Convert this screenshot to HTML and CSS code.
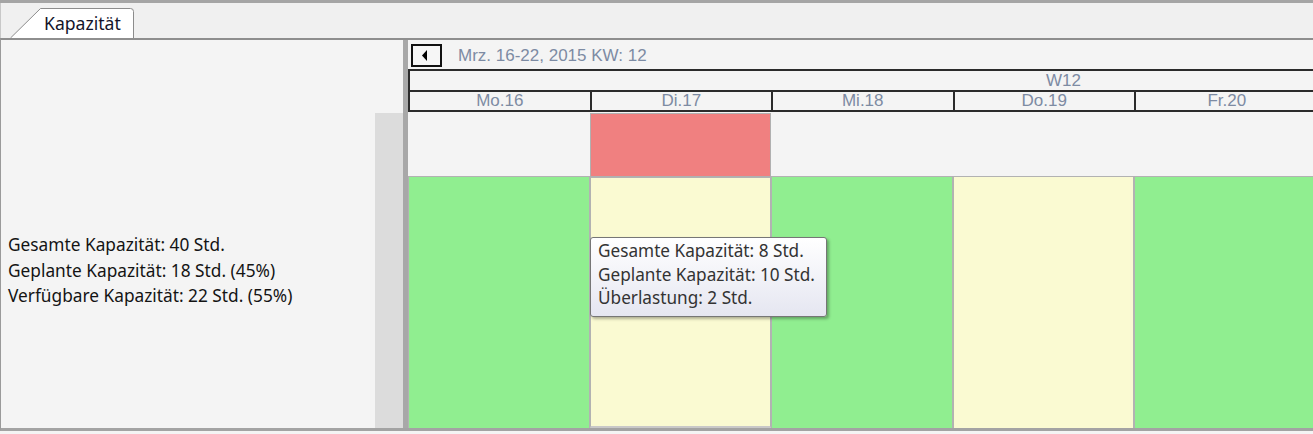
FILE: index.html
```html
<!DOCTYPE html>
<html>
<head>
<meta charset="utf-8">
<link rel="stylesheet" href="styles.css">
</head>
<body>
<div class="frame">
  <div class="tabstrip">
    <div class="tab">
      <svg class="tab-shape" width="126" height="32" viewBox="0 0 126 32">
        <path d="M0.5 31 L30.5 1.5 L120.5 1.5 Q123.5 1.5 123.5 4.5 L123.5 31" fill="#ffffff" stroke="#8c8c8c" stroke-width="1"/>
      </svg>
      <span class="tab-label">Kapazität</span>
    </div>
  </div>
  <div class="content">
    <div class="left">
      <div class="summary">
        <div>Gesamte Kapazität: 40 Std.</div>
        <div>Geplante Kapazität: 18 Std. (45%)</div>
        <div>Verfügbare Kapazität: 22 Std. (55%)</div>
      </div>
      <div class="gutter"></div>
    </div>
    <div class="divider"></div>
    <div class="right">
      <div class="toolbar">
        <div class="navbtn"><svg width="8" height="11" viewBox="0 0 8 11"><path d="M6 0 L6 11 L1 5.5 Z" fill="#000"/></svg></div>
        <span class="range">Mrz. 16-22, 2015 KW: 12</span>
      </div>
      <div class="header">
        <div class="week"><span class="week-label">W12</span></div>
        <div class="days">
          <div class="day">Mo.16</div>
          <div class="day">Di.17</div>
          <div class="day">Mi.18</div>
          <div class="day">Do.19</div>
          <div class="day last">Fr.20</div>
        </div>
      </div>
      <div class="grid">
        <div class="col"><div class="top"></div><div class="bar green"></div></div>
        <div class="col"><div class="top red"></div><div class="bar yellow"></div></div>
        <div class="col"><div class="top"></div><div class="bar green"></div></div>
        <div class="col"><div class="top"></div><div class="bar yellow full"></div></div>
        <div class="col last"><div class="top"></div><div class="bar green open"></div></div>
      </div>
      <div class="tooltip">
        <div>Gesamte Kapazität: 8 Std.</div>
        <div>Geplante Kapazität: 10 Std.</div>
        <div>Überlastung: 2 Std.</div>
      </div>
    </div>
  </div>
</div>
</body>
</html>
```
FILE: styles.css
```css
* { box-sizing: border-box; }
html, body {
  margin: 0;
  padding: 0;
  overflow: hidden;
}
body {
  width: 1313px;
  height: 434px;
  background: #f4f4f4;
  font-family: "Liberation Sans", Arial, sans-serif;
}
.frame {
  border-top: 3px solid #a5a5a5;
  height: 434px;
  display: flex;
  flex-direction: column;
}
.tabstrip {
  height: 35px;
  background: #f0f0f0;
  position: relative;
  border-left: 1px solid #c8c8c8;
}
.tab {
  position: absolute;
  left: 9px;
  top: 4px;
  width: 126px;
  height: 32px;
}
.tab-shape {
  position: absolute;
  left: 0;
  top: 0;
}
.tab-label {
  position: absolute;
  left: 34px;
  top: 4px;
  font-family: "Noto Sans", "Open Sans", sans-serif;
  font-size: 17.6px;
  color: #14142a;
}
.content {
  display: flex;
  height: 393px;
  border-top: 2px solid #8e8e8e;
  border-bottom: 3px solid #a3a3a3;
  border-left: 1px solid #9a9a9a;
  background: #f4f4f4;
}
.left {
  width: 402px;
  flex: none;
  display: flex;
}
.summary {
  flex: 1;
  padding: 192px 0 0 7px;
  font-family: "Noto Sans", "Open Sans", sans-serif;
  font-size: 17.3px;
  line-height: 25.5px;
  color: #141414;
}
.gutter {
  width: 28px;
  margin-top: 73px;
  background: #dcdcdc;
}
.divider {
  width: 5px;
  flex: none;
  background: #a8a8a8;
}
.right {
  flex: 1;
  min-width: 0;
  overflow: hidden;
  position: relative;
  display: flex;
  flex-direction: column;
}
.toolbar {
  height: 29px;
  display: flex;
  align-items: center;
  padding-left: 3px;
}
.navbtn {
  width: 31px;
  height: 23px;
  border: 2px solid #111;
  display: flex;
  align-items: center;
  justify-content: center;
  background: #f6f6f6;
  margin-top: 1px;
  padding-right: 3px;
}
.range {
  margin-left: 16px;
  margin-top: 3px;
  font-size: 17px;
  color: #7d8ba3;
}
.header {
  border-top: 2px solid #2b2b2b;
  border-left: 2px solid #2b2b2b;
}
.week {
  height: 21px;
  line-height: 19px;
  font-size: 17px;
  color: #7d8ba3;
  border-bottom: 2px solid #2b2b2b;
  padding-left: 636px;
}
.days {
  display: flex;
  height: 20px;
  border-bottom: 2px solid #2b2b2b;
}
.day {
  width: 181.5px;
  flex: none;
  text-align: center;
  font-size: 17px;
  line-height: 18px;
  color: #7d8ba3;
  border-right: 2px solid #2b2b2b;
}
.day.last {
  width: 181.5px;
  border-right: none;
}
.grid {
  flex: 1;
  display: flex;
}
.col {
  width: 181.5px;
  flex: none;
  display: flex;
  flex-direction: column;
}
.col.last {
  flex: 1;
  width: auto;
}
.top {
  height: 64px;
}
.top.red {
  background: #f08080;
  border: 1px solid #b0b0b0;
  margin-top: 1px;
  height: 64px;
}
.bar {
  flex: 1;
  border: 1px solid #b2b2b2;
  border-bottom: none;
}
.bar.open {
  border-right: none;
}
.green { background: #90ee90; }
.yellow {
  background: #fafad2;
  border-bottom: 2px solid #c8c8c8;
}
.yellow.full {
  border-bottom: none;
}
.tooltip {
  position: absolute;
  left: 182px;
  top: 197px;
  width: 237px;
  height: 80px;
  border: 1px solid #767676;
  border-radius: 3px;
  background: linear-gradient(#ffffff, #e5e6f1);
  box-shadow: 2px 2px 3px rgba(0,0,0,0.3);
  padding: 1px 0 0 7px;
  font-family: "Noto Sans", "Open Sans", sans-serif;
  font-size: 17.2px;
  line-height: 23.5px;
  color: #333333;
}
```
